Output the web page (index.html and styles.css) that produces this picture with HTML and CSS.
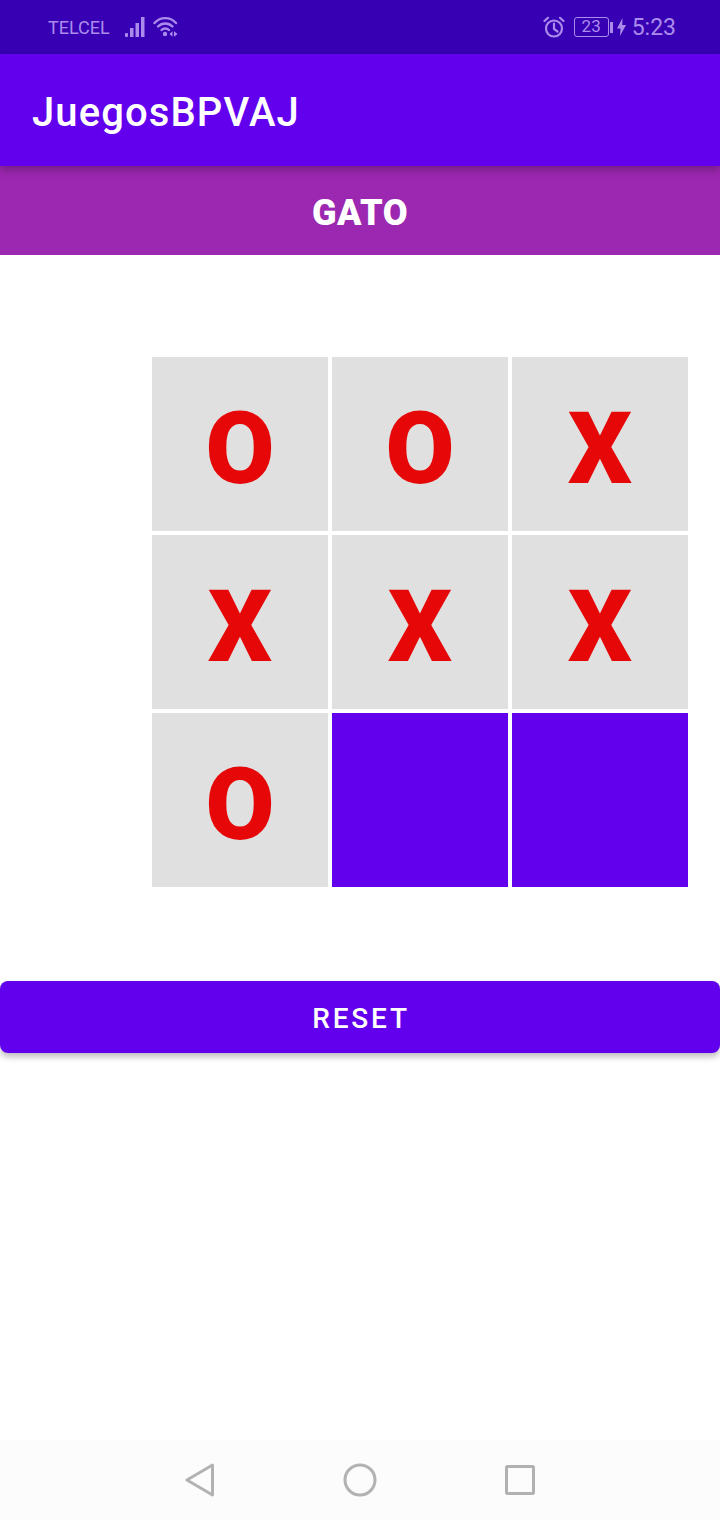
FILE: index.html
```html
<!DOCTYPE html>
<html lang="en">
<head>
    <meta charset="UTF-8">
    <meta name="viewport" content="width=device-width, initial-scale=1.0">
    <title>JuegosBPVAJ</title>
    <link rel="stylesheet" href="styles.css">
</head>
<body>
    <div class="screen">
        <div class="status-bar">
            <div class="status-left">
                <span class="carrier">TELCEL</span>
                <svg class="icon-signal" width="22" height="21" viewBox="0 0 22 21" fill="#ab8cec">
                    <rect x="0" y="16" width="3" height="4" rx="1"/>
                    <rect x="5" y="11" width="3.500" height="9"/>
                    <rect x="10.500" y="6" width="3.500" height="14"/>
                    <rect x="16" y="0" width="3.500" height="20"/>
                </svg>
                <svg class="icon-wifi" width="26" height="22" viewBox="0 0 26 22" fill="none" stroke="#ab8cec" stroke-width="2.400" stroke-linecap="round">
                    <path d="M1.500 7C7.500 0.500 17 0.500 23 7"/>
                    <path d="M5 10.500C9 6.500 15.500 6.500 19.500 10.500"/>
                    <path d="M8.500 14C10.500 12 14 12 16 14"/>
                    <circle cx="12" cy="18" r="2.200" fill="#ab8cec" stroke="none"/>
                    <path d="M16.500 18l3-2.800v5.600zM21 15.200v5.600l3.500-2.800z" fill="#ab8cec" stroke="none"/>
                </svg>
            </div>
            <div class="status-right">
                <svg class="icon-alarm" width="22" height="22" viewBox="0 0 22 22" fill="none" stroke="#ab8cec" stroke-width="2.200" stroke-linecap="round">
                    <circle cx="11" cy="12.500" r="8"/>
                    <path d="M11 7.500v5.500l3.500 2.500"/>
                    <path d="M1.500 5L5 1.800M20.500 5L17 1.800"/>
                </svg>
                <div class="battery">
                    <span class="battery-box">23</span>
                    <span class="battery-tip"></span>
                </div>
                <svg class="icon-bolt" width="9" height="18" viewBox="0 0 9 18" fill="#ab8cec">
                    <path d="M5.500 0L0 10.500h3.500L3 18l6-11H5.200z"/>
                </svg>
                <span class="clock">5:23</span>
            </div>
        </div>

        <header class="app-bar">JuegosBPVAJ</header>
        <div class="title-bar">GATO</div>

        <div class="board">
            <div class="cell">O</div>
            <div class="cell">O</div>
            <div class="cell">X</div>
            <div class="cell">X</div>
            <div class="cell">X</div>
            <div class="cell">X</div>
            <div class="cell">O</div>
            <div class="cell cell-empty"></div>
            <div class="cell cell-empty"></div>
        </div>

        <button class="reset-btn" type="button">RESET</button>

        <nav class="nav-bar">
            <svg width="30" height="34" viewBox="0 0 30 34" fill="none" stroke="#b2b2b2" stroke-width="3" stroke-linejoin="round">
                <path d="M27.500 2L2 17l25.500 15z"/>
            </svg>
            <svg width="34" height="34" viewBox="0 0 34 34" fill="none" stroke="#b2b2b2" stroke-width="3">
                <circle cx="17" cy="17" r="15"/>
            </svg>
            <svg width="30" height="30" viewBox="0 0 30 30" fill="none" stroke="#b2b2b2" stroke-width="3" stroke-linejoin="round">
                <rect x="1.500" y="1.500" width="27" height="27" rx="1"/>
            </svg>
        </nav>
    </div>
</body>
</html>
```

FILE: styles.css
```css
* {
    box-sizing: border-box;
}

body {
    margin: 0;
    font-family: Roboto, "Liberation Sans", sans-serif;
    background-color: white;
}

.screen {
    width: 720px;
    height: 1520px;
    display: flex;
    flex-direction: column;
    overflow: hidden;
}

.status-bar {
    height: 54px;
    flex: none;
    display: flex;
    justify-content: space-between;
    align-items: center;
    padding: 0 44px 0 48px;
    background-color: #3700b3;
    color: #ab8cec;
}

.status-left,
.status-right {
    display: flex;
    align-items: center;
}

.carrier {
    font-size: 18px;
    width: 77px;
}

.icon-wifi {
    margin-left: 6px;
}

.icon-alarm {
    margin-right: 9px;
}

.battery {
    display: flex;
    align-items: center;
    margin-right: 4px;
}

.battery-box {
    width: 35px;
    height: 20px;
    border: 1.500px solid #ab8cec;
    border-radius: 3px;
    font-size: 17px;
    line-height: 17px;
    text-align: center;
}

.battery-tip {
    width: 3px;
    height: 11px;
    margin-left: 1px;
    background-color: #ab8cec;
}

.clock {
    font-size: 23px;
    margin-left: 6px;
    padding-top: 1px;
}

.app-bar {
    height: 112px;
    flex: none;
    display: flex;
    align-items: center;
    padding: 4px 0 0 32px;
    background-color: #6200ee;
    color: white;
    font-size: 40px;
    font-weight: 500;
    letter-spacing: 1.100px;
    box-shadow: 0 4px 8px rgba(0, 0, 0, 0.25);
    position: relative;
}

.title-bar {
    height: 89px;
    flex: none;
    display: flex;
    justify-content: center;
    align-items: center;
    padding-top: 4px;
    background-color: #9c27b0;
    color: white;
    font-size: 36px;
    font-weight: 900;
    letter-spacing: 0.500px;
}

.board {
    display: grid;
    grid-template-columns: repeat(3, 176px);
    grid-template-rows: repeat(3, 174px);
    gap: 4px;
    margin: 102px 0 0 152px;
}

.cell {
    display: flex;
    justify-content: center;
    align-items: center;
    padding-top: 8px;
    background-color: #e0e0e0;
    color: #e60808;
    font-size: 100px;
    font-weight: 900;
}

.cell-empty {
    background-color: #6200ee;
}

.reset-btn {
    height: 72px;
    flex: none;
    margin-top: 94px;
    padding: 3px 0 0 2px;
    border: none;
    border-radius: 8px;
    background-color: #6200ee;
    color: white;
    font-family: inherit;
    font-size: 28px;
    font-weight: 500;
    letter-spacing: 2.800px;
    box-shadow: 0 4px 6px rgba(0, 0, 0, 0.25);
}

.nav-bar {
    height: 80px;
    flex: none;
    margin-top: auto;
    display: flex;
    justify-content: center;
    align-items: center;
    gap: 128px;
    background-color: #fcfcfc;
}
```
